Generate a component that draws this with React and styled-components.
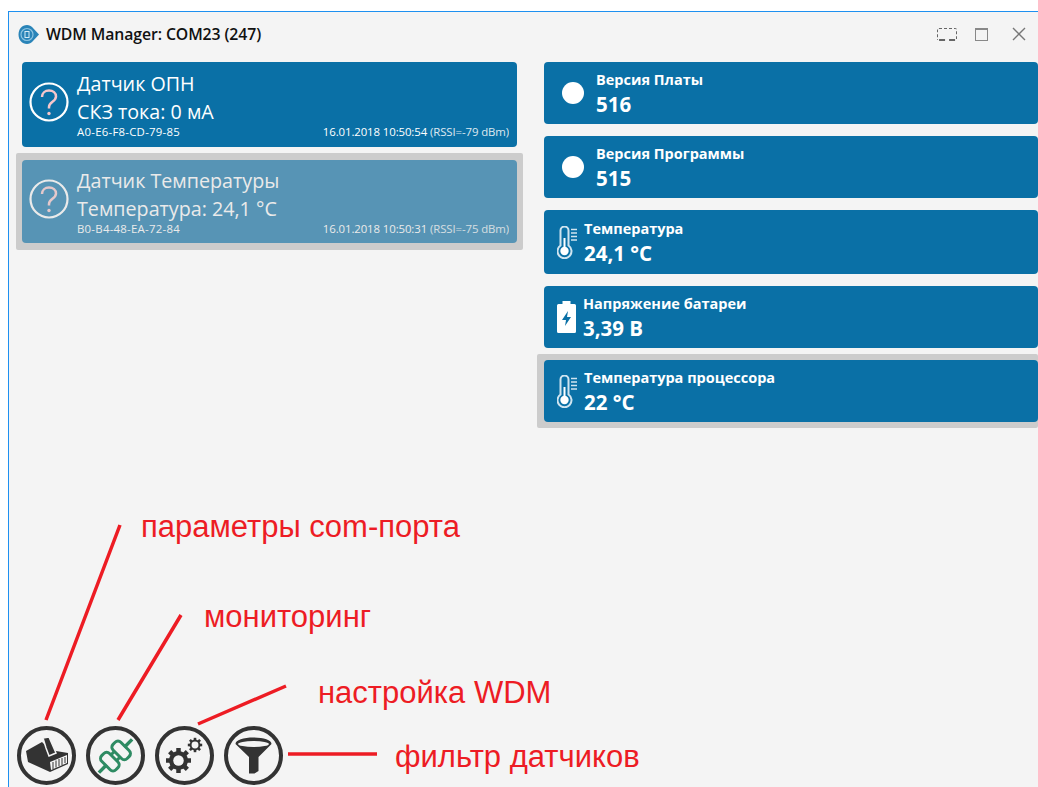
import React from 'react'
import styled, { createGlobalStyle } from 'styled-components'

const GlobalStyle = createGlobalStyle`
  html, body {
    margin: 0;
    background: #fff;
    overflow: hidden;
  }
  * { box-sizing: border-box; }
`

const sensors = [
  { name: 'Датчик ОПН', value: 'СКЗ тока: 0 мА', mac: 'A0-E6-F8-CD-79-85', stamp: '16.01.2018 10:50:54', rssi: '(RSSI=-79 dBm)' },
  { name: 'Датчик Температуры', value: 'Температура: 24,1 °C', mac: 'B0-B4-48-EA-72-84', stamp: '16.01.2018 10:50:31', rssi: '(RSSI=-75 dBm)', selected: true },
]

const params = [
  { title: 'Версия Платы', value: '516', icon: 'dot' },
  { title: 'Версия Программы', value: '515', icon: 'dot' },
  { title: 'Температура', value: '24,1 °C', icon: 'thermo', tall: true },
  { title: 'Напряжение батареи', value: '3,39 В', icon: 'battery' },
  { title: 'Температура процессора', value: '22 °C', icon: 'thermo', selected: true },
]

const callouts = [
  { text: 'параметры com-порта', x: 141, y: 510 },
  { text: 'мониторинг', x: 204, y: 600 },
  { text: 'настройка WDM', x: 318, y: 676 },
  { text: 'фильтр датчиков', x: 395, y: 740 },
]

const AppLogo = () => (
  <svg width="21" height="21" viewBox="0 0 21 21">
    <path d="M0.500 10.500C0.500 5 4 1 9 1c2.500 0 4 1 5.500 2.500L21 10.500l-6.500 7C13 19 11.500 20 9 20 4 20 0.500 16 0.500 10.500z" fill="#2a84b8" />
    <circle cx="9" cy="10.500" r="6" fill="none" stroke="#8cc4e2" strokeWidth="1.200" />
    <rect x="7" y="7.500" width="4" height="6" fill="none" stroke="#d5ebf5" strokeWidth="1" />
  </svg>
)

const QuestionIcon = () => (
  <svg width="40" height="40" viewBox="0 0 40 40">
    <circle cx="20" cy="20" r="18.500" fill="none" stroke="#fff" strokeWidth="2.200" />
    <path d="M13 15c0-3.800 3-6.500 7-6.500s7 2.500 7 6c0 5.200-7 5.400-7 10.500v1.500" fill="none" stroke="#f6c6cb" strokeWidth="2.500" />
    <circle cx="20" cy="31.500" r="1.700" fill="#f6c6cb" />
  </svg>
)

const Thermometer = () => (
  <svg width="20" height="33" viewBox="0 0 20 33">
    <path d="M3.500 19.500V4.500a4 4 0 0 1 8 0v15a7 7 0 1 1-8 0z" fill="none" stroke="#cfe4f0" strokeWidth="2" />
    <circle cx="7.500" cy="25" r="4.200" fill="#fff" />
    <rect x="6.500" y="12" width="2" height="10" fill="#fff" />
    <path d="M14 3.500h6M14 7h6M14 10.500h6M14 14h6" stroke="#cfe4f0" strokeWidth="1.600" />
  </svg>
)

const Battery = () => (
  <svg width="19" height="32" viewBox="0 0 19 32">
    <path d="M5.500 0h8v3h4a1.500 1.500 0 0 1 1.500 1.500v26a1.500 1.500 0 0 1-1.500 1.500h-16A1.500 1.500 0 0 1 0 30.500v-26A1.500 1.500 0 0 1 1.500 3h4z" fill="#fff" />
    <path d="M11 10 5 19h4l-1 6 6-9h-4z" fill="#0a70a6" />
  </svg>
)

const PortIcon = () => (
  <svg width="59" height="59" viewBox="0 0 59 59">
    <path d="M9 25 25 16l8 8 18 3v11L33 46 11 36z" fill="#333" />
    <path d="M26 12l6-1 7 16-7 3-3-8z" fill="#333" stroke="#f4f4f4" strokeWidth="1.500" />
    <path d="M33 36l17-7v8l-16 7z" fill="#f4f4f4" />
    <path d="M36 36v7M39 34.500v7M42 33v7M45 32v7M48 31v6" stroke="#333" strokeWidth="1" />
  </svg>
)

const PlugIcon = () => (
  <svg width="59" height="59" viewBox="0 0 59 59" fill="none" stroke="#2e8b63" strokeWidth="3">
    <g transform="rotate(-45 29.500 30)">
      <path d="M6 30h11M42 30h11" strokeWidth="3.500" />
      <rect x="16" y="20" width="11" height="20" rx="4" />
      <rect x="32" y="20" width="11" height="20" rx="4" />
      <path d="M27 26h5M27 34h5" />
    </g>
  </svg>
)

const Cog = ({ cx, cy, r, w, hole }) => (
  <g>
    {[0, 45, 90, 135].map(a => (
      <rect key={a} x={cx - w / 2} y={cy - r} width={w} height={r * 2} fill="#333" transform={`rotate(${a} ${cx} ${cy})`} />
    ))}
    <circle cx={cx} cy={cy} r={r * 0.76} fill="#333" />
    <circle cx={cx} cy={cy} r={r * hole} fill="#f4f4f4" />
  </g>
)

const GearsIcon = () => (
  <svg width="59" height="59" viewBox="0 0 59 59">
    <Cog cx={23.500} cy={34.500} r={12.500} w={4.500} hole={0.42} />
    <Cog cx={40} cy={19} r={7.200} w={2.600} hole={0.48} />
  </svg>
)

const FunnelIcon = () => (
  <svg width="59" height="59" viewBox="0 0 59 59">
    <path d="M11.500 18c0-4 8-6.500 18-6.500s18 2.500 18 6.500L34.500 31v14l-4 2.500h-5.500V31z" fill="#333" />
    <ellipse cx="29.500" cy="18" rx="15.500" ry="3" fill="#f4f4f4" />
  </svg>
)

const Dot = () => <DotShape />

const paramIcons = {
  dot: <Dot />,
  thermo: <Thermometer />,
  battery: <Battery />,
}

export default function App() {
  return (
    <>
      <GlobalStyle />
      <Window>
        <TitleBar>
          <AppLogo />
          <Title>WDM Manager: COM23 (247)</Title>
          <WindowButtons>
            <TabletButton />
            <MaximizeButton />
            <CloseButton>
              <svg width="14" height="14" viewBox="0 0 14 14">
                <path d="M1 1l12 12M13 1 1 13" stroke="#777" strokeWidth="1.400" />
              </svg>
            </CloseButton>
          </WindowButtons>
        </TitleBar>
        <Columns>
          <Column>
            {sensors.map(s => (
              <SensorSlot key={s.mac} $selected={s.selected}>
                <SensorCard $faded={s.selected}>
                  <QuestionIcon />
                  <SensorBody>
                    <SensorLine>{s.name}</SensorLine>
                    <SensorLine>{s.value}</SensorLine>
                    <SensorMeta>
                      <MacLabel>{s.mac}</MacLabel>
                      <span>
                        {s.stamp} <Rssi>{s.rssi}</Rssi>
                      </span>
                    </SensorMeta>
                  </SensorBody>
                </SensorCard>
              </SensorSlot>
            ))}
          </Column>
          <Column>
            {params.map(p => (
              <ParamSlot key={p.title} $selected={p.selected}>
                <ParamCard $tall={p.tall} $wide={p.icon === 'dot'}>
                  <ParamIcon>{paramIcons[p.icon]}</ParamIcon>
                  <div>
                    <ParamTitle>{p.title}</ParamTitle>
                    <ParamValue>{p.value}</ParamValue>
                  </div>
                </ParamCard>
              </ParamSlot>
            ))}
          </Column>
        </Columns>
        <Toolbar>
          <RoundButton><PortIcon /></RoundButton>
          <RoundButton><PlugIcon /></RoundButton>
          <RoundButton><GearsIcon /></RoundButton>
          <RoundButton><FunnelIcon /></RoundButton>
        </Toolbar>
      </Window>
      <Pointers width="1038" height="787" viewBox="0 0 1038 787">
        <path d="M120 525 46 720M181 615 118 720M286 686 198 724M288 754h89" stroke="#ed1c24" strokeWidth="3.500" fill="none" />
      </Pointers>
      {callouts.map(c => (
        <Callout key={c.text} $x={c.x} $y={c.y}>{c.text}</Callout>
      ))}
    </>
  )
}

const Window = styled.div`
  margin: 11px 0 0 8px;
  height: 776px;
  display: flex;
  flex-direction: column;
  background: #f4f4f4;
  border-top: 1px solid #1e90f0;
  border-left: 1px solid #1e90f0;
  font-family: 'Open Sans', 'Noto Sans', sans-serif;
`

const TitleBar = styled.div`
  height: 44px;
  padding: 0 12px 0 9px;
  display: flex;
  align-items: center;
  gap: 7px;
`

const Title = styled.div`
  font-size: 15.800px;
  font-weight: 600;
  letter-spacing: -0.1px;
  color: #111;
`

const WindowButtons = styled.div`
  margin-left: auto;
  display: flex;
  align-items: center;
  gap: 18px;
`

const TabletButton = styled.div`
  width: 20px;
  height: 13px;
  border: 1px dashed #666;
  border-bottom: 2px dashed #666;
  border-radius: 2px;
`

const MaximizeButton = styled.div`
  width: 13px;
  height: 13px;
  border: 1.500px solid #888;
  border-top-width: 2px;
`

const CloseButton = styled.div`
  display: flex;
  margin-left: 6px;
`

const Columns = styled.div`
  flex: 1;
  display: grid;
  grid-template-columns: 507px 501px;
  column-gap: 14px;
  padding-left: 7px;
`

const Column = styled.div`
  display: flex;
  flex-direction: column;
`

const SensorSlot = styled.div`
  padding: ${({ $selected }) => ($selected ? '7px 6px' : '6px')};
  background: ${({ $selected }) => ($selected ? '#cccccc' : 'transparent')};
  border-radius: 2px;
`

const ParamSlot = styled.div`
  padding: 6px 0 6px 7px;
  background: ${({ $selected }) => ($selected ? '#cccccc' : 'transparent')};
  border-radius: 2px;
`

const SensorCard = styled.div`
  height: ${({ $faded }) => ($faded ? '83px' : '85px')};
  padding: 0 8px 6px 7px;
  display: flex;
  align-items: center;
  gap: 8px;
  border-radius: 4px;
  color: #fff;
  background: #0a70a6;
  opacity: ${({ $faded }) => ($faded ? 0.6 : 1)};
`

const SensorBody = styled.div`
  flex: 1;
  margin-top: 5px;
`

const SensorLine = styled.div`
  font-size: 19.700px;
  line-height: 28px;
`

const SensorMeta = styled.div`
  display: flex;
  justify-content: space-between;
  font-size: 11.400px;
  line-height: 12px;
  letter-spacing: -0.1px;
`

const MacLabel = styled.span`
  letter-spacing: 0.25px;
`

const Rssi = styled.span`
  opacity: 0.85;
`

const ParamCard = styled.div`
  height: ${({ $tall }) => ($tall ? '64px' : '62px')};
  padding-left: ${({ $wide }) => ($wide ? '18px' : '13px')};
  display: flex;
  align-items: center;
  gap: ${({ $wide }) => ($wide ? '12px' : '7px')};
  border-radius: 4px;
  color: #fff;
  background: #0a70a6;
`

const ParamIcon = styled.div`
  display: flex;
`

const DotShape = styled.div`
  width: 22px;
  height: 22px;
  border-radius: 50%;
  background: #fff;
`

const ParamTitle = styled.div`
  font-size: 14.500px;
  line-height: 22px;
  font-weight: 700;
`

const ParamValue = styled.div`
  font-size: 20.500px;
  line-height: 26px;
  font-weight: 700;
`

const Toolbar = styled.div`
  height: 59px;
  margin-bottom: 2px;
  padding-left: 8px;
  display: flex;
  gap: 10px;
`

const RoundButton = styled.div`
  width: 59px;
  height: 59px;
  border-radius: 50%;
  border: 4px solid #333;
  display: flex;
  align-items: center;
  justify-content: center;
  svg {
    flex: none;
  }
`

const Pointers = styled.svg`
  position: absolute;
  left: 0;
  top: 0;
  pointer-events: none;
`

const Callout = styled.div`
  position: absolute;
  left: ${({ $x }) => $x}px;
  top: ${({ $y }) => $y}px;
  font-family: 'Liberation Sans', Arial, sans-serif;
  font-size: 31px;
  line-height: 34px;
  color: #ed1c24;
  white-space: nowrap;
`
